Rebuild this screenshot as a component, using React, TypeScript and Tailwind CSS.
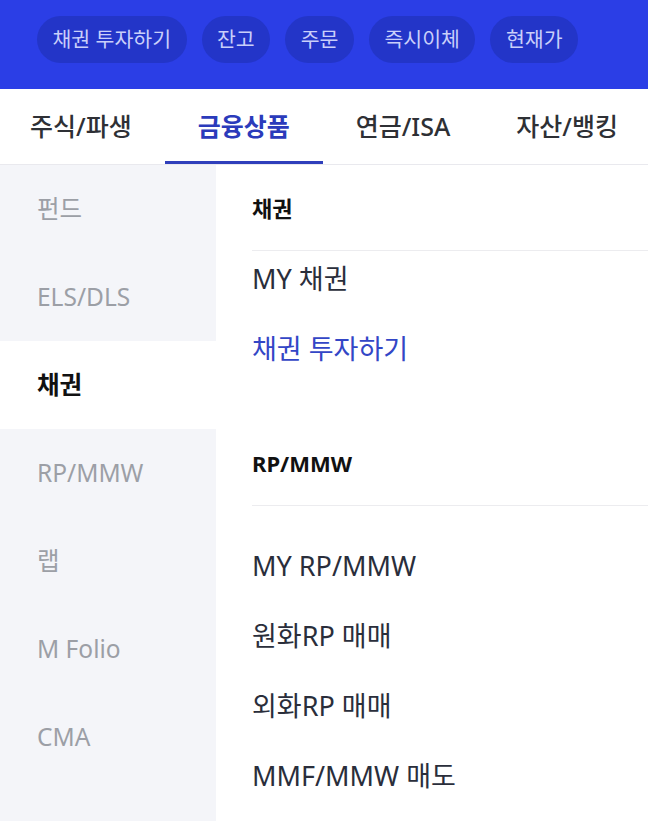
import React from "react";

const FONT = { fontFamily: '"Noto Sans", "Noto Sans CJK KR", sans-serif' };

const pills = ["채권 투자하기", "잔고", "주문", "즉시이체", "현재가"];
const tabs = ["주식/파생", "금융상품", "연금/ISA", "자산/뱅킹"];
const side = ["펀드", "ELS/DLS", "채권", "RP/MMW", "랩", "M Folio", "CMA"];

export default function App() {
  return (
    <div className="flex h-screen w-full flex-col overflow-hidden bg-white" style={FONT}>
      {/* Blue header with quick pills */}
      <div className="flex h-[89px] shrink-0 items-start gap-[15px] bg-[#2b3ee6] pl-[37px] pt-[16px]">
        {pills.map((p) => (
          <div
            key={p}
            className="flex h-[47px] items-center whitespace-nowrap rounded-full bg-[#2335c8] px-[15.5px] text-[20.5px] leading-none text-[#c9cffa]"
          >
            {p}
          </div>
        ))}
      </div>

      {/* Main tabs */}
      <div className="flex h-[76px] shrink-0 border-b border-[#e9e9ee] bg-white">
        {tabs.map((t, i) => {
          const active = i === 1;
          return (
            <div
              key={t}
              className={
                "flex h-full items-center whitespace-nowrap border-b-[3px] pt-[2px] text-[25px] leading-none " +
                (i === 0 ? "pl-[30px] pr-[33px] " : "px-[33px] ") +
                (active
                  ? "border-[#2f3fbb] font-bold text-[#2b3bbb]"
                  : "border-transparent font-medium text-[#2e3035]")
              }
            >
              {t}
            </div>
          );
        })}
      </div>

      {/* Body */}
      <div className="flex min-h-0 flex-1">
        <div className="flex w-[216px] shrink-0 flex-col bg-[#f4f5f9]">
          {side.map((s) => {
            const active = s === "채권";
            return (
              <div
                key={s}
                className={
                  "flex h-[88px] shrink-0 items-center pl-[37px] text-[24.5px] leading-none " +
                  (active ? "bg-white font-bold text-[#111111]" : "text-[#9c9fa6]")
                }
              >
                {s}
              </div>
            );
          })}
        </div>

        <div className="flex min-w-0 flex-1 flex-col pl-[36px]">
          <div className="flex h-[86px] shrink-0 items-center border-b border-[#ececef] text-[22px] font-bold leading-none text-[#111111]">
            채권
          </div>
          <div className="-mt-[8px] flex flex-col">
            <div className="flex h-[70px] items-center text-[27px] leading-none text-[#2a2e3b]">MY 채권</div>
            <div className="flex h-[70px] items-center text-[27px] leading-none text-[#3346c6]">채권 투자하기</div>
          </div>

          <div className="mt-[37px] flex h-[86px] shrink-0 items-center border-b border-[#ececef] text-[22px] font-bold leading-none text-[#111111]">
            RP/MMW
          </div>
          <div className="flex flex-col pt-[24px]">
            {["MY RP/MMW", "원화RP 매매", "외화RP 매매", "MMF/MMW 매도"].map((x) => (
              <div key={x} className="flex h-[70px] items-center text-[27px] leading-none text-[#2a2e3b]">
                {x}
              </div>
            ))}
          </div>
        </div>
      </div>
    </div>
  );
}
